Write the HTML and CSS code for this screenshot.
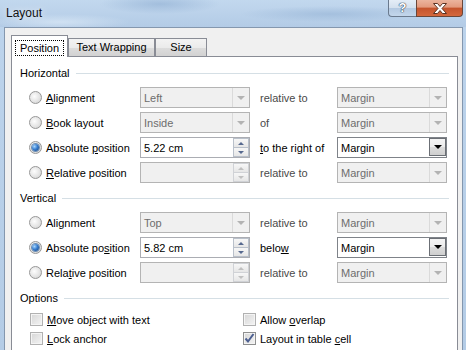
FILE: index.html
```html
<!DOCTYPE html>
<html lang="en">
<head>
    <meta charset="UTF-8">
    <title>Layout</title>
    <link rel="stylesheet" href="styles.css">
</head>
<body>
    <div class="titlebar">
        <span class="title">Layout</span>
        <div class="caption">
            <div class="btn-help">?</div>
            <div class="btn-close">
                <svg width="16" height="11" viewBox="0 0 16 11">
                    <path d="M1.5 0.5h4l2.5 3 2.5-3h4l-4.5 5 4.5 5h-4l-2.5-3-2.5 3h-4l4.5-5z" fill="#fff" stroke="#5a3324" stroke-width="1"/>
                </svg>
            </div>
        </div>
    </div>
    <div class="frame">
        <div class="dialog">
            <div class="tabs">
                <div class="tab active"><span class="focus">Position</span></div>
                <div class="tab wrap">Text Wrapping</div>
                <div class="tab size">Size</div>
            </div>
            <div class="panel">
                <div class="head"><span>Horizontal</span><i></i></div>
                <div class="rows">
                    <div class="opt"><span class="radio"></span><span><u>A</u>lignment</span></div>
                    <div class="combo"><span>Left</span><b class="drop"></b></div>
                    <span class="rel">relative to</span>
                    <div class="combo"><span>Margin</span><b class="drop"></b></div>

                    <div class="opt"><span class="radio"></span><span><u>B</u>ook layout</span></div>
                    <div class="combo"><span>Inside</span><b class="drop"></b></div>
                    <span class="rel">of</span>
                    <div class="combo"><span>Margin</span><b class="drop"></b></div>

                    <div class="opt"><span class="radio on"></span><span>Absolute <u>p</u>osition</span></div>
                    <div class="spin on"><span>5.22 cm</span><b class="arrows"><i class="up"></i><i class="down"></i></b></div>
                    <span class="rel on"><u>t</u>o the right of</span>
                    <div class="combo on"><span>Margin</span><b class="drop"></b></div>

                    <div class="opt"><span class="radio"></span><span><u>R</u>elative position</span></div>
                    <div class="spin"><span></span><b class="arrows"><i class="up"></i><i class="down"></i></b></div>
                    <span class="rel">relative to</span>
                    <div class="combo"><span>Margin</span><b class="drop"></b></div>
                </div>

                <div class="head gap"><span>Vertical</span><i></i></div>
                <div class="rows">
                    <div class="opt"><span class="radio"></span><span>Ali<u>g</u>nment</span></div>
                    <div class="combo"><span>Top</span><b class="drop"></b></div>
                    <span class="rel">relative to</span>
                    <div class="combo"><span>Margin</span><b class="drop"></b></div>

                    <div class="opt"><span class="radio on"></span><span>Absolute po<u>s</u>ition</span></div>
                    <div class="spin on"><span>5.82 cm</span><b class="arrows"><i class="up"></i><i class="down"></i></b></div>
                    <span class="rel on">belo<u>w</u></span>
                    <div class="combo on"><span>Margin</span><b class="drop"></b></div>

                    <div class="opt"><span class="radio"></span><span>Rela<u>t</u>ive position</span></div>
                    <div class="spin"><span></span><b class="arrows"><i class="up"></i><i class="down"></i></b></div>
                    <span class="rel">relative to</span>
                    <div class="combo"><span>Margin</span><b class="drop"></b></div>
                </div>

                <div class="head gap"><span>Options</span><i></i></div>
                <div class="checks">
                    <div class="opt"><span class="cb"></span><span><u>M</u>ove object with text</span></div>
                    <div class="opt"><span class="cb"></span><span>Allow <u>o</u>verlap</span></div>
                    <div class="opt"><span class="cb"></span><span><u>L</u>ock anchor</span></div>
                    <div class="opt"><span class="cb checked">
                        <svg width="11" height="11" viewBox="0 0 11 11">
                            <path d="M1.5 5.5l2.5 3 5.5-7.5" fill="none" stroke="#4c5f90" stroke-width="2"/>
                        </svg>
                    </span><span>Layout in table <u>c</u>ell</span></div>
                </div>
            </div>
        </div>
    </div>
</body>
</html>
```

FILE: styles.css
```css
body {
    margin: 0;
    width: 466px;
    height: 350px;
    overflow: hidden;
    font-family: "Liberation Sans", Arial, sans-serif;
    font-size: 11px;
    color: #000;
    background: linear-gradient(#bdd4ec, #b4cce6);
}
.titlebar {
    height: 27px;
    display: flex;
    justify-content: space-between;
    align-items: flex-start;
    background:
        radial-gradient(ellipse 60px 10px at 160px 4px, rgba(150,180,214,.7), transparent),
        radial-gradient(ellipse 90px 8px at 330px 14px, rgba(150,180,214,.6), transparent),
        radial-gradient(ellipse 70px 8px at 60px 22px, rgba(215,230,245,.8), transparent),
        linear-gradient(#c2d8ee, #b3cbe6);
}
.title {
    margin: 6px 0 0 6px;
    font-size: 12px;
    line-height: 14px;
    color: #111;
    text-shadow: 0 0 6px rgba(255,255,255,.9);
}
.caption {
    display: flex;
    margin-right: 3px;
}
.btn-help {
    box-sizing: border-box;
    width: 28px;
    height: 17px;
    border: 1px solid #6a7a8e;
    border-top: none;
    border-right: none;
    border-radius: 0 0 0 4px;
    background: linear-gradient(#e4edf7 0, #d3e0ee 50%, #b2c8e1 50%, #c3d6eb 100%);
    color: #fff;
    font-weight: bold;
    font-size: 13px;
    line-height: 16px;
    text-align: center;
    text-shadow: 0 0 1px #2c3e55, 0 0 1px #2c3e55, 0 0 1px #2c3e55;
}
.btn-close {
    box-sizing: border-box;
    width: 47px;
    height: 17px;
    border: 1px solid #6b4638;
    border-top: none;
    border-radius: 0 0 4px 0;
    background: linear-gradient(#ebb49e 0, #e39a7d 45%, #c4532c 50%, #d4683d 100%);
    display: flex;
    align-items: center;
    justify-content: center;
}
.frame {
    padding: 0 3px 0 4px;
}
.dialog {
    box-sizing: border-box;
    height: 323px;
    background: #f0f0f0;
    border: 1px solid #8497ae;
    border-bottom: none;
}
.tabs {
    display: flex;
    align-items: flex-end;
    padding: 7px 0 0 6px;
}
.tab {
    box-sizing: border-box;
    height: 18px;
    border: 1px solid #898c95;
    border-bottom: none;
    background: linear-gradient(#f3f3f3 0, #ebebeb 50%, #dddddd 50%, #d2d2d2 100%);
    display: flex;
    align-items: center;
    justify-content: center;
    line-height: 13px;
}
.tab.wrap {
    width: 87px;
}
.tab.size {
    width: 52px;
}
.tab.active {
    width: 57px;
    height: 22px;
    margin-bottom: -1px;
    position: relative;
    z-index: 1;
    background: #fff;
    align-items: flex-start;
    padding-top: 4px;
}
.focus {
    box-sizing: border-box;
    width: 49px;
    height: 16px;
    border: 1px dotted #000;
    text-align: center;
    line-height: 14px;
}
.panel {
    box-sizing: border-box;
    height: 300px;
    margin: 0 4px 0 6px;
    padding: 9px 8px 0 8px;
    background: #fff;
    border: 1px solid #898c95;
}
.head {
    display: flex;
    align-items: center;
    height: 14px;
    gap: 6px;
}
.head i {
    flex: 1;
    height: 1px;
    background: #d5dfe5;
}
.head.gap {
    margin-top: 8px;
}
.rows {
    display: grid;
    grid-template-columns: 111px 110px 87px 110px;
    grid-auto-rows: 21px;
    row-gap: 4px;
    margin: 7px 0 0 9px;
}
.opt {
    display: flex;
    align-items: center;
    gap: 4px;
}
.radio {
    box-sizing: border-box;
    width: 13px;
    height: 13px;
    border-radius: 50%;
    border: 1px solid #979797;
    background: radial-gradient(circle at 40% 40%, #fdfdfd 0, #e4e4e4 55%, #cbcbcb 100%);
    display: flex;
    align-items: center;
    justify-content: center;
}
.radio.on::after {
    content: "";
    width: 7px;
    height: 7px;
    border-radius: 50%;
    background: radial-gradient(circle at 35% 35%, #a8d8ff 0, #3a7fd0 45%, #123e78 100%);
    box-shadow: 0 0 0 1px #6f8fb3;
}
.rel {
    display: flex;
    align-items: center;
    padding-left: 10px;
    color: #4a4a4a;
}
.rel.on {
    color: #000;
}
.combo, .spin {
    box-sizing: border-box;
    height: 21px;
    border: 1px solid #b4b4b4;
    background: #f0f0f0;
    color: #6d6d6d;
    display: flex;
    align-items: center;
    padding-left: 3px;
}
.combo.on, .spin.on {
    background: #fff;
    color: #000;
}
.combo.on {
    border-color: #7f8389;
}
.spin.on {
    border-color: #abadb3;
}
.drop {
    box-sizing: border-box;
    margin-left: auto;
    width: 17px;
    height: 19px;
    border-left: 1px solid #dadada;
    display: flex;
    align-items: center;
    justify-content: center;
}
.drop::before {
    content: "";
    border-left: 4px solid transparent;
    border-right: 4px solid transparent;
    border-top: 4px solid #b3b3b3;
}
.combo.on .drop {
    height: 18px;
    align-self: flex-start;
    border: 1px solid #6b6f75;
    background: linear-gradient(#f4f4f4 0, #ececec 50%, #dcdcdc 50%, #cfcfcf 100%);
}
.combo.on .drop::before {
    border-top-color: #000;
}
.arrows {
    margin-left: auto;
    width: 16px;
    height: 19px;
    display: flex;
    flex-direction: column;
}
.arrows i {
    flex: 1;
    border: 1px solid #d0d2d6;
    background: linear-gradient(#f7f7f7, #e6e6e6);
    display: flex;
    align-items: center;
    justify-content: center;
}
.arrows i + i {
    border-top: none;
}
.arrows .up::before {
    content: "";
    border-left: 3px solid transparent;
    border-right: 3px solid transparent;
    border-bottom: 3px solid #c0c0c0;
}
.arrows .down::before {
    content: "";
    border-left: 3px solid transparent;
    border-right: 3px solid transparent;
    border-top: 3px solid #c0c0c0;
}
.spin.on .arrows i {
    border-color: #b9c0ca;
}
.spin.on .arrows .up::before {
    border-bottom-color: #56698f;
}
.spin.on .arrows .down::before {
    border-top-color: #56698f;
}
.checks {
    display: grid;
    grid-template-columns: 213px 1fr;
    grid-auto-rows: 17px;
    row-gap: 2px;
    margin: 6px 0 0 10px;
}
.cb {
    box-sizing: border-box;
    width: 13px;
    height: 13px;
    border: 1px solid #b1b1b1;
    background: linear-gradient(135deg, #d6d6d6, #f4f4f4);
    box-shadow: inset 0 0 0 1px #f4f4f4;
    display: flex;
    align-items: center;
    justify-content: center;
}
.cb.checked {
    border-color: #8e8f8f;
}
```
